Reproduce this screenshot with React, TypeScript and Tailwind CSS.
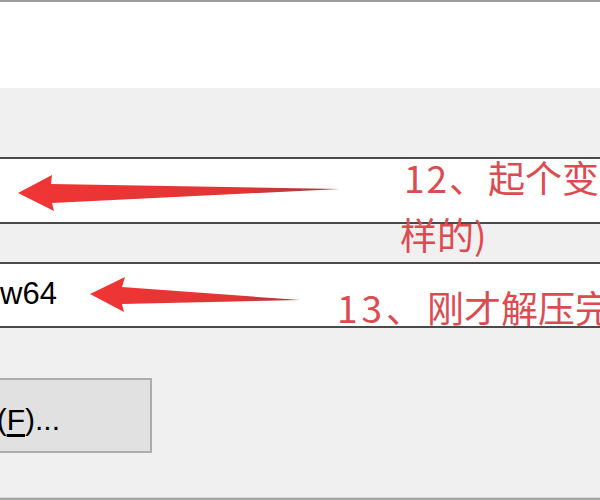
const redFont = { fontFamily: '"Noto Sans CJK SC", "Noto Sans", sans-serif' };
const uiFont = { fontFamily: '"Liberation Sans", "Noto Sans CJK SC", sans-serif' };

function Arrows() {
  return (
    <svg
      className="absolute inset-0 pointer-events-none"
      width="600"
      height="500"
      viewBox="0 0 600 500"
    >
      <defs>
        <linearGradient id="shaft" x1="0" x2="1" y1="0" y2="0">
          <stop offset="0" stopColor="#f03535" />
          <stop offset="0.7" stopColor="#e23434" />
          <stop offset="1" stopColor="#9a4040" />
        </linearGradient>
      </defs>
      {/* 12 的箭头 */}
      <path
        d="M18 193 L52 175 L51 184 L340 189 L52 203 L54 211 Z"
        fill="url(#shaft)"
      />
      {/* 13 的箭头 */}
      <path
        d="M90 294 L125 277 L122 287 L300 300 L122 304 L124 312 Z"
        fill="url(#shaft)"
      />
    </svg>
  );
}

export default function App() {
  return (
    <div
      className="relative w-[600px] h-[500px] overflow-hidden bg-[#f0f0f0] flex flex-col"
      style={uiFont}
    >
      <div className="h-[2px] bg-[#9d9d9d]" />
      <div className="h-[86px] bg-white" />

      {/* 变量名 */}
      <div className="mt-[69px] h-[67px] -mx-[10px] border-y-2 border-[#4a4a4a] bg-white" />

      {/* 变量值 */}
      <div className="mt-[38px] h-[66px] -mx-[10px] border-y-2 border-[#4a4a4a] bg-white flex items-center">
        <div className="w-[67px] flex justify-end whitespace-nowrap text-[31px] text-black leading-none pb-[4px]">
          D:\mingw64
        </div>
      </div>

      {/* 浏览文件按钮 */}
      <div className="mt-[50px] h-[75px] w-[352px] -ml-[200px] border-2 border-[#adadad] bg-[#e1e1e1] flex items-center justify-end pr-[90px] pt-[8px] whitespace-nowrap text-[30px] text-black leading-none">
        浏览文件(<span className="underline underline-offset-4">F</span>)...
      </div>

      <div className="mt-auto h-[1px] bg-[#d9d9d9]" />
      <div className="h-[2px] bg-[#a5a5a5]" />

      <Arrows />

      <div
        className="absolute left-[404px] top-[149px] whitespace-nowrap text-[37px] leading-[57px] text-[#dc4b50]"
        style={redFont}
      >
        <span className="tracking-[2px]">12、</span>起个变量名（随便起，我的是这
        <br />
        <span className="-ml-[4px]">样的)</span>
      </div>
      <div
        className="absolute left-[337px] top-[279px] whitespace-nowrap text-[37px] leading-[57px] text-[#dc4b50]"
        style={redFont}
      >
        <span className="tracking-[4px]">13、</span>刚才解压完的文件夹路径
      </div>
    </div>
  );
}
